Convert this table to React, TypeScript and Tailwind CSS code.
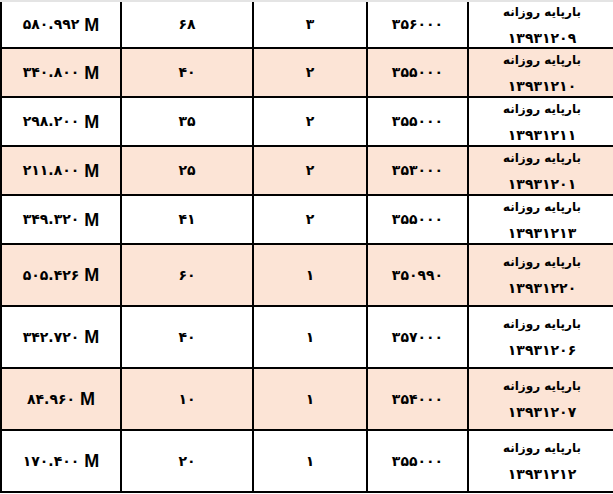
import React from 'react';

interface Row {
  total: string;
  qty: string;
  count: string;
  price: string;
  code: string;
  tall?: boolean;
  shaded?: boolean;
}

const rows: Row[] = [
  { total: '۵۸۰.۹۹۲', qty: '۶۸', count: '۳', price: '۳۵۶۰۰۰', code: '۱۳۹۳۱۲۰۹' },
  { total: '۳۴۰.۸۰۰', qty: '۴۰', count: '۲', price: '۳۵۵۰۰۰', code: '۱۳۹۳۱۲۱۰', shaded: true },
  { total: '۲۹۸.۲۰۰', qty: '۳۵', count: '۲', price: '۳۵۵۰۰۰', code: '۱۳۹۳۱۲۱۱' },
  { total: '۲۱۱.۸۰۰', qty: '۲۵', count: '۲', price: '۳۵۳۰۰۰', code: '۱۳۹۳۱۲۰۱', shaded: true },
  { total: '۳۴۹.۳۲۰', qty: '۴۱', count: '۲', price: '۳۵۵۰۰۰', code: '۱۳۹۳۱۲۱۳' },
  { total: '۵۰۵.۴۲۶', qty: '۶۰', count: '۱', price: '۳۵۰۹۹۰', code: '۱۳۹۳۱۲۲۰', tall: true, shaded: true },
  { total: '۳۴۲.۷۲۰', qty: '۴۰', count: '۱', price: '۳۵۷۰۰۰', code: '۱۳۹۳۱۲۰۶', tall: true },
  { total: '۸۴.۹۶۰', qty: '۱۰', count: '۱', price: '۳۵۴۰۰۰', code: '۱۳۹۳۱۲۰۷', tall: true, shaded: true },
  { total: '۱۷۰.۴۰۰', qty: '۲۰', count: '۱', price: '۳۵۵۰۰۰', code: '۱۳۹۳۱۲۱۲', tall: true },
];

const fa = "font-['DejaVu_Sans',sans-serif] font-bold text-black";

const App = () => {
  return (
    <div className="w-[613px] h-[494px] bg-white overflow-hidden">
      <div className="h-[2px] bg-[#e4e4e4]" />
      <div className="border-l-2 border-black">
        {rows.map((row, i) => (
          <div
            key={i}
            className={`grid grid-cols-[120px_132px_114px_101px_146px] border-b-2 border-black ${
              row.tall ? 'h-[62px]' : i === 0 ? 'h-[47px]' : 'h-[49px]'
            } ${row.shaded ? 'bg-[#fce4d6]' : 'bg-white'}`}
          >
            <div className="flex items-center justify-center gap-[5px] border-r-2 border-black" dir="ltr">
              <span className={`${fa} text-[14px] tracking-[-0.5px]`}>{row.total}</span>
              <span className="font-['Liberation_Sans',sans-serif] font-bold text-[18px] leading-none text-black">M</span>
            </div>
            <div className={`flex items-center justify-center border-r-2 border-black text-[14px] ${fa}`}>{row.qty}</div>
            <div className={`flex items-center justify-center border-r-2 border-black text-[14px] ${fa}`}>{row.count}</div>
            <div className={`flex items-center justify-center border-r-2 border-black text-[14px] tracking-[-0.8px] ${fa}`}>{row.price}</div>
            <div dir="rtl" className={`flex flex-col items-center justify-center gap-[8px] leading-[18px] ${fa}`}>
              <span className="text-[12px]">بارپایه روزانه</span>
              <span className="text-[14px] tracking-[0.5px]">{row.code}</span>
            </div>
          </div>
        ))}
      </div>
    </div>
  );
};

export default App;
